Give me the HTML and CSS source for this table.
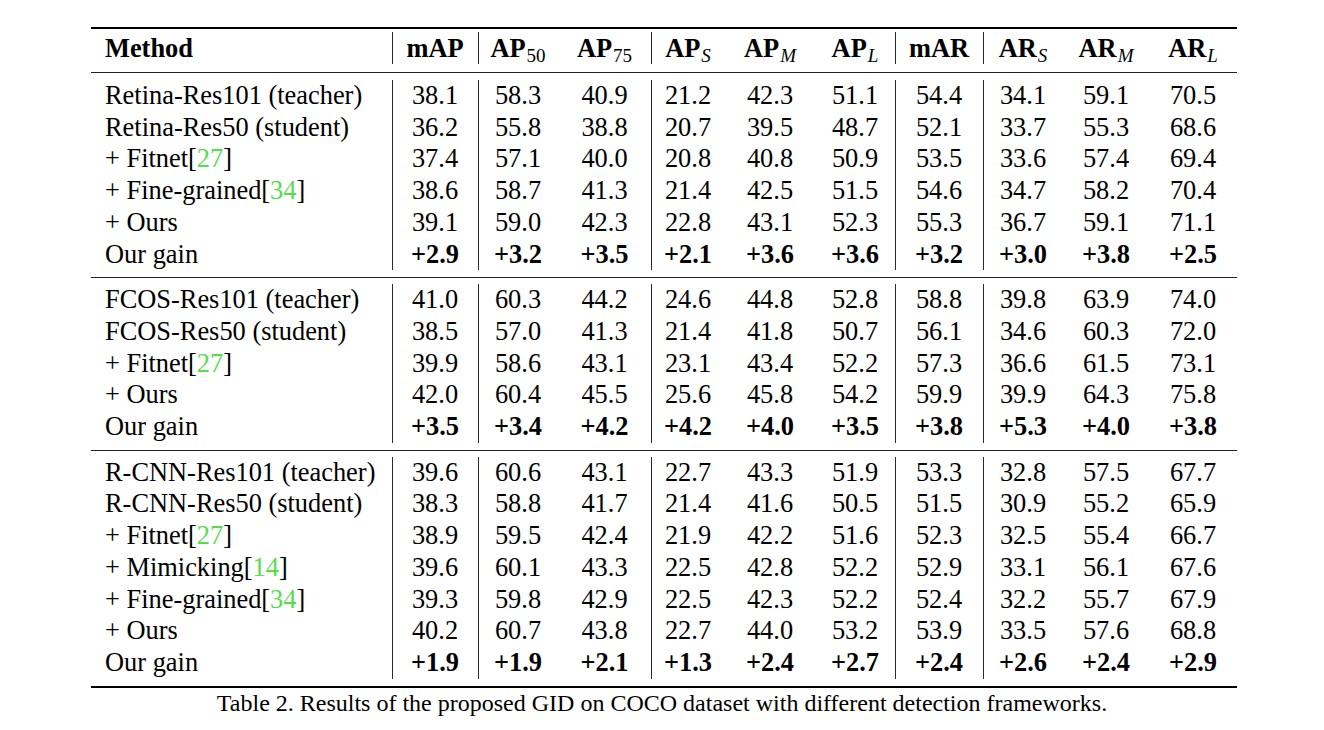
FILE: index.html
```html
<!DOCTYPE html>
<html lang="en">
<head>
<meta charset="utf-8">
<title>Table 2</title>
<link rel="stylesheet" href="styles.css">
</head>
<body>
<div class="figure">
<table class="results">
<colgroup>
<col class="c-method"><col class="c-map"><col class="c-ap50"><col class="c-ap75"><col class="c-aps"><col class="c-apm"><col class="c-apl"><col class="c-mar"><col class="c-ars"><col class="c-arm"><col class="c-arl">
</colgroup>
<thead>
<tr class="head">
<th class="name">Method</th>
<th class="v">mAP</th>
<th class="v">AP<span class="sub">50</span></th>
<th>AP<span class="sub">75</span></th>
<th class="v">AP<span class="sub it">S</span></th>
<th>AP<span class="sub it">M</span></th>
<th>AP<span class="sub it">L</span></th>
<th class="v">mAR</th>
<th class="v">AR<span class="sub it">S</span></th>
<th>AR<span class="sub it">M</span></th>
<th>AR<span class="sub it">L</span></th>
</tr>
</thead>
<tbody>
<tr class="sep first"><td colspan="11"><div class="rule"></div></td></tr>
<tr><td class="name">Retina-Res101 (teacher)</td><td class="v">38.1</td><td class="v">58.3</td><td>40.9</td><td class="v">21.2</td><td>42.3</td><td>51.1</td><td class="v">54.4</td><td class="v">34.1</td><td>59.1</td><td>70.5</td></tr>
<tr><td class="name">Retina-Res50 (student)</td><td class="v">36.2</td><td class="v">55.8</td><td>38.8</td><td class="v">20.7</td><td>39.5</td><td>48.7</td><td class="v">52.1</td><td class="v">33.7</td><td>55.3</td><td>68.6</td></tr>
<tr><td class="name">+ Fitnet[<span class="cite">27</span>]</td><td class="v">37.4</td><td class="v">57.1</td><td>40.0</td><td class="v">20.8</td><td>40.8</td><td>50.9</td><td class="v">53.5</td><td class="v">33.6</td><td>57.4</td><td>69.4</td></tr>
<tr><td class="name">+ Fine-grained[<span class="cite">34</span>]</td><td class="v">38.6</td><td class="v">58.7</td><td>41.3</td><td class="v">21.4</td><td>42.5</td><td>51.5</td><td class="v">54.6</td><td class="v">34.7</td><td>58.2</td><td>70.4</td></tr>
<tr><td class="name">+ Ours</td><td class="v">39.1</td><td class="v">59.0</td><td>42.3</td><td class="v">22.8</td><td>43.1</td><td>52.3</td><td class="v">55.3</td><td class="v">36.7</td><td>59.1</td><td>71.1</td></tr>
<tr class="gain"><td class="name">Our gain</td><td class="v">+2.9</td><td class="v">+3.2</td><td>+3.5</td><td class="v">+2.1</td><td>+3.6</td><td>+3.6</td><td class="v">+3.2</td><td class="v">+3.0</td><td>+3.8</td><td>+2.5</td></tr>
<tr class="sep"><td colspan="11"><div class="rule"></div></td></tr>
<tr><td class="name">FCOS-Res101 (teacher)</td><td class="v">41.0</td><td class="v">60.3</td><td>44.2</td><td class="v">24.6</td><td>44.8</td><td>52.8</td><td class="v">58.8</td><td class="v">39.8</td><td>63.9</td><td>74.0</td></tr>
<tr><td class="name">FCOS-Res50 (student)</td><td class="v">38.5</td><td class="v">57.0</td><td>41.3</td><td class="v">21.4</td><td>41.8</td><td>50.7</td><td class="v">56.1</td><td class="v">34.6</td><td>60.3</td><td>72.0</td></tr>
<tr><td class="name">+ Fitnet[<span class="cite">27</span>]</td><td class="v">39.9</td><td class="v">58.6</td><td>43.1</td><td class="v">23.1</td><td>43.4</td><td>52.2</td><td class="v">57.3</td><td class="v">36.6</td><td>61.5</td><td>73.1</td></tr>
<tr><td class="name">+ Ours</td><td class="v">42.0</td><td class="v">60.4</td><td>45.5</td><td class="v">25.6</td><td>45.8</td><td>54.2</td><td class="v">59.9</td><td class="v">39.9</td><td>64.3</td><td>75.8</td></tr>
<tr class="gain"><td class="name">Our gain</td><td class="v">+3.5</td><td class="v">+3.4</td><td>+4.2</td><td class="v">+4.2</td><td>+4.0</td><td>+3.5</td><td class="v">+3.8</td><td class="v">+5.3</td><td>+4.0</td><td>+3.8</td></tr>
<tr class="sep"><td colspan="11"><div class="rule"></div></td></tr>
<tr><td class="name">R-CNN-Res101 (teacher)</td><td class="v">39.6</td><td class="v">60.6</td><td>43.1</td><td class="v">22.7</td><td>43.3</td><td>51.9</td><td class="v">53.3</td><td class="v">32.8</td><td>57.5</td><td>67.7</td></tr>
<tr><td class="name">R-CNN-Res50 (student)</td><td class="v">38.3</td><td class="v">58.8</td><td>41.7</td><td class="v">21.4</td><td>41.6</td><td>50.5</td><td class="v">51.5</td><td class="v">30.9</td><td>55.2</td><td>65.9</td></tr>
<tr><td class="name">+ Fitnet[<span class="cite">27</span>]</td><td class="v">38.9</td><td class="v">59.5</td><td>42.4</td><td class="v">21.9</td><td>42.2</td><td>51.6</td><td class="v">52.3</td><td class="v">32.5</td><td>55.4</td><td>66.7</td></tr>
<tr><td class="name">+ Mimicking[<span class="cite">14</span>]</td><td class="v">39.6</td><td class="v">60.1</td><td>43.3</td><td class="v">22.5</td><td>42.8</td><td>52.2</td><td class="v">52.9</td><td class="v">33.1</td><td>56.1</td><td>67.6</td></tr>
<tr><td class="name">+ Fine-grained[<span class="cite">34</span>]</td><td class="v">39.3</td><td class="v">59.8</td><td>42.9</td><td class="v">22.5</td><td>42.3</td><td>52.2</td><td class="v">52.4</td><td class="v">32.2</td><td>55.7</td><td>67.9</td></tr>
<tr><td class="name">+ Ours</td><td class="v">40.2</td><td class="v">60.7</td><td>43.8</td><td class="v">22.7</td><td>44.0</td><td>53.2</td><td class="v">53.9</td><td class="v">33.5</td><td>57.6</td><td>68.8</td></tr>
<tr class="gain"><td class="name">Our gain</td><td class="v">+1.9</td><td class="v">+1.9</td><td>+2.1</td><td class="v">+1.3</td><td>+2.4</td><td>+2.7</td><td class="v">+2.4</td><td class="v">+2.6</td><td>+2.4</td><td>+2.9</td></tr>
</tbody>
</table>
<p class="caption">Table 2. Results of the proposed GID on COCO dataset with different detection frameworks.</p>
</div>
</body>
</html>
```

FILE: styles.css
```css
html, body {
  margin: 0;
  padding: 0;
  background: #ffffff;
}

body {
  font-family: "Liberation Serif", "Times New Roman", serif;
  color: #000000;
}

.figure {
  padding-top: 27px;
}

.results {
  margin-left: 91px;
  width: 1146px;
  table-layout: fixed;
  border-collapse: separate;
  border-spacing: 0;
  border-top: 2px solid #000;
  border-bottom: 2px solid #000;
  padding: 3px 0 7px 0;
  font-size: 26.4px;
}

.c-method { width: 301px; }
.c-map { width: 86px; }
.c-ap50 { width: 80px; }
.c-ap75 { width: 93px; }
.c-aps { width: 74px; }
.c-apm { width: 90px; }
.c-apl { width: 80px; }
.c-mar { width: 88px; }
.c-ars { width: 80px; }
.c-arm { width: 86px; }
.c-arl { width: 88px; }

.results th,
.results td {
  padding: 0;
  text-align: center;
  white-space: nowrap;
  vertical-align: middle;
}

.results th {
  font-weight: bold;
  height: 32px;
  line-height: 32px;
}

.results td {
  height: 31.7px;
  line-height: 31.7px;
}

.results .name {
  text-align: left;
  padding-left: 14px;
}

.results .v {
  background: linear-gradient(#2a2a2a, #2a2a2a) left top / 1px 100% no-repeat;
}

.sub {
  font-size: 0.72em;
  font-weight: normal;
  line-height: 0;
  position: relative;
  top: 0.24em;
  margin-left: 1px;
}

.sub.it {
  font-style: italic;
}

.gain td {
  font-weight: bold;
}

.gain td.name {
  font-weight: normal;
}

.cite {
  color: #55dd4c;
}

.results tr.sep td {
  height: auto;
  line-height: 0;
  padding: 7px 0 6px 0;
}

.results tr.sep.first td {
  padding: 8px 0 7px 0;
}

.rule {
  height: 1px;
  background: #222;
}

.caption {
  margin: 1px 0 0 0;
  text-align: center;
  font-size: 24px;
  line-height: 28px;
}
```
